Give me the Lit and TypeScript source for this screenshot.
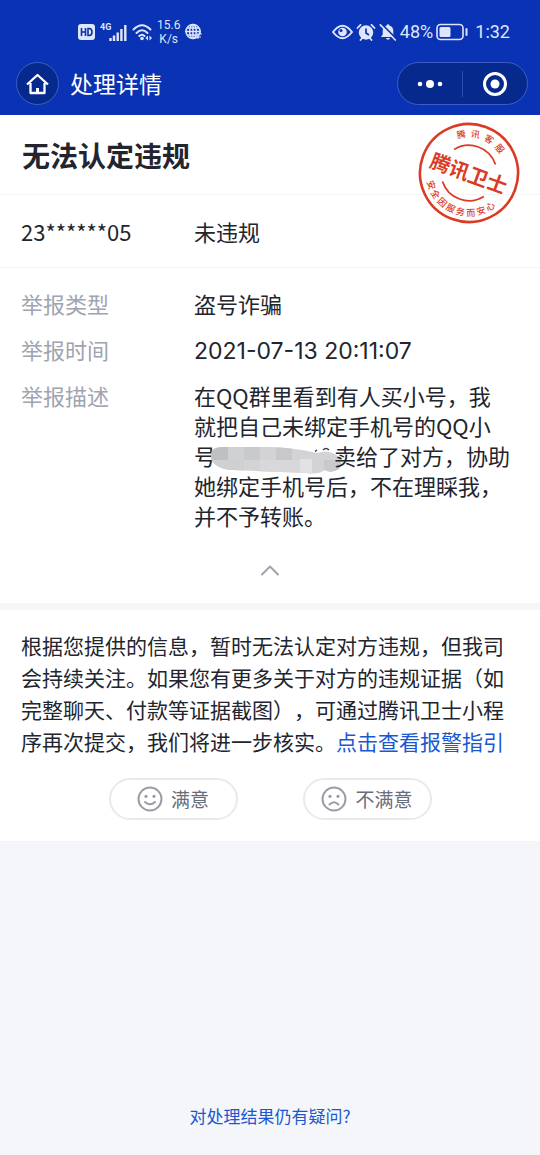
import { LitElement, html, css, svg } from "lit";
import { customElement, state } from "lit/decorators.js";

@customElement("status-bar")
class StatusBar extends LitElement {
  static styles = css`
    :host {
      display: flex;
      justify-content: space-between;
      align-items: center;
      height: 52px;
      padding: 11px 30px 0 78px;
      box-sizing: border-box;
      color: #dfe6fb;
      font-family: Roboto, "Noto Sans CJK SC", sans-serif;
    }
    .group {
      display: flex;
      align-items: center;
      gap: 4px;
    }
    .right {
      gap: 3px;
    }
    .speed {
      display: flex;
      flex-direction: column;
      align-items: center;
      font-size: 12px;
      line-height: 14px;
    }
    .level,
    .clock {
      font-size: 18px;
      line-height: 22px;
    }
    .clock {
      margin-left: 4px;
    }
    svg {
      display: block;
    }
    .net {
      font: 700 9px Roboto, sans-serif;
    }
  `;

  render() {
    return html`
      <div class="group">
        <svg width="17" height="16" viewBox="0 0 17 16">
          <rect width="17" height="16" rx="3" fill="#dfe6fb" />
          <path
            d="M3.5 4v8M7.5 4v8M3.5 8h4M10 4.500v7h1.200q2.800 0 2.800-3.500t-2.800-3.500z"
            fill="none"
            stroke="#0a30ae"
            stroke-width="1.600"
          />
        </svg>
        <svg width="29" height="22" viewBox="0 0 29 22">
          <text class="net" x="1" y="9" fill="#dfe6fb">4G</text>
          <path
            d="M11.500 17v3M15 14.500v5.500M18.700 11.500v8.500M22.400 8v12M26.300 4v16"
            stroke="#dfe6fb"
            stroke-width="2.400"
          />
        </svg>
        <svg width="21" height="18" viewBox="0 0 21 18">
          <path
            d="M1.500 6.500Q10 -2 18.500 6.500M4.500 10Q10 4.500 15.500 10M7.300 13Q10 10.500 12.500 13"
            fill="none"
            stroke="#dfe6fb"
            stroke-width="2"
            stroke-linecap="round"
          />
          <circle cx="10" cy="15.500" r="1.800" fill="#dfe6fb" />
          <path d="M16 12.500v5l-2.500-2.500zM17.500 12.500v5l2.500-2.500z" fill="#dfe6fb" />
        </svg>
        <span class="speed"><span>15.6</span><span>K/s</span></span>
        <svg width="18" height="18" viewBox="0 0 18 18" fill="none" stroke="#dfe6fb" stroke-width="1.500">
          <circle cx="9" cy="8.500" r="7" />
          <ellipse cx="9" cy="8.500" rx="3.300" ry="7" />
          <path d="M9 1.500v14M2.800 5h12.400M1 8.500h16M2.800 12h12.400" />
          <path d="M13 11h4l-1.500-1.500M17 14h-4l1.500 1.500" stroke-width="1.200" />
        </svg>
      </div>
      <div class="group right">
        <svg width="21" height="16" viewBox="0 0 21 16">
          <path d="M1 8Q10.500-4.500 20 8Q10.500 20.500 1 8z" fill="none" stroke="#dfe6fb" stroke-width="2" />
          <circle cx="10.500" cy="8" r="4.300" fill="#dfe6fb" />
          <circle cx="9" cy="6.500" r="1.500" fill="#0a30ae" />
        </svg>
        <svg width="20" height="18" viewBox="0 0 20 18">
          <circle cx="10" cy="9.500" r="7.200" fill="#dfe6fb" />
          <path
            d="M1.500 5l3-3.200M18.500 5l-3-3.200M4.500 17l1.800-2M15.500 17l-1.800-2"
            stroke="#dfe6fb"
            stroke-width="1.800"
            stroke-linecap="round"
          />
          <path d="M10 5.500v4.500l3 2" fill="none" stroke="#0a30ae" stroke-width="1.700" />
        </svg>
        <svg width="18" height="18" viewBox="0 0 18 18">
          <path
            d="M9 1.200q1.300 0 1.300 1.300 4 1.200 4 5.500v3.500l1.700 2.500H2l1.700-2.500V8q0-4.300 4-5.500Q7.700 1.200 9 1.200zM7 15h4q-.4 1.800-2 1.800T7 15z"
            fill="#dfe6fb"
          />
          <path d="M2.500 0.800l15 15.200" stroke="#0a30ae" stroke-width="1.700" />
          <path d="M1.300 1.800l15 15.200" stroke="#dfe6fb" stroke-width="1.700" stroke-linecap="round" />
        </svg>
        <span class="level">48%</span>
        <svg width="32" height="18" viewBox="0 0 32 18">
          <rect x="1" y="1.500" width="26" height="15" rx="3.500" fill="none" stroke="#dfe6fb" stroke-width="1.600" />
          <rect x="3.500" y="4" width="11" height="10" rx="1.500" fill="#dfe6fb" />
          <path d="M30.500 6v6" stroke="#dfe6fb" stroke-width="2" stroke-linecap="round" />
        </svg>
        <span class="clock">1:32</span>
      </div>
    `;
  }
}

@customElement("guard-stamp")
class GuardStamp extends LitElement {
  static styles = css`
    :host {
      display: block;
      width: 102px;
      height: 102px;
    }
    svg {
      display: block;
      width: 100%;
      height: 100%;
    }
    text {
      fill: #db3b24;
      font-family: "Noto Sans CJK SC", sans-serif;
      text-anchor: middle;
    }
    .name {
      font-size: 20px;
      font-weight: 700;
    }
    .rim {
      font-size: 9px;
      font-weight: 500;
    }
  `;

  private rim(chars: string, step: number, top: boolean) {
    const list = [...chars];
    return list.map((c, i) => {
      const a = (i - (list.length - 1) / 2) * step * (top ? 1 : -1);
      return svg`<text class="rim" y=${top ? -36 : 43} transform="rotate(${a})">${c}</text>`;
    });
  }

  render() {
    return html`
      <svg viewBox="-51 -51 102 102" role="img" aria-label="腾讯卫士">
        <g transform="rotate(20)">
          <circle r="49" fill="none" stroke="#db3b24" stroke-width="2.600" />
          <path
            d="M-22-17A28 28 0 0 1 22-17M-22 17A28 28 0 0 0 22 17"
            fill="none"
            stroke="#db3b24"
            stroke-width="1.800"
          />
          ${this.rim("腾讯客服", 21, true)} ${this.rim("安全因服务而安心", 15, false)}
          <text class="name" y="8">腾讯卫士</text>
        </g>
      </svg>
    `;
  }
}

@customElement("app-root")
class AppRoot extends LitElement {
  static styles = css`
    :host {
      display: flex;
      flex-direction: column;
      min-height: 100vh;
      background: #f4f6fa;
      color: #22252e;
      font-family: "Noto Sans CJK SC", sans-serif;
      text-spacing-trim: space-all;
    }
    header {
      background: #0932b4;
      color: #fff;
    }
    button {
      font: inherit;
      color: inherit;
      background: none;
      border: 0;
      padding: 0;
      margin: 0;
      cursor: pointer;
    }
    svg {
      display: block;
    }
    a {
      color: #1a58d0;
      text-decoration: none;
    }
    .nav {
      display: flex;
      align-items: center;
      gap: 11px;
      height: 63px;
      padding: 0 12px 0 16px;
    }
    .home,
    .capsule {
      background: #06298e;
      border: 1px solid #3d5fc4;
      box-sizing: border-box;
      height: 43px;
    }
    .home {
      display: grid;
      place-items: center;
      width: 43px;
      border-radius: 50%;
    }
    .nav h1 {
      flex: 1;
      margin: 0;
      padding-bottom: 2px;
      font-size: 23px;
      line-height: 32px;
      font-weight: 400;
    }
    .capsule {
      display: grid;
      grid-template-columns: 1fr 1px 1fr;
      align-items: center;
      width: 131px;
      border-radius: 22px;
    }
    .capsule button {
      display: grid;
      place-items: center;
      height: 100%;
    }
    .split {
      height: 26px;
      background: #2c4eb0;
    }
    .panel {
      background: #fff;
      position: relative;
    }
    .stamp {
      position: absolute;
      top: 7px;
      right: 20px;
    }
    h2 {
      margin: 0;
      padding: 22px 22px 20px;
      font-size: 28px;
      line-height: 37px;
      font-weight: 700;
      border-bottom: 1px solid #f3f4f6;
    }
    dl {
      margin: 0;
      display: grid;
      gap: 16px;
      padding: 20px 29px 0 21px;
      font-size: 22px;
      line-height: 30px;
    }
    dl div {
      display: grid;
      grid-template-columns: 173px 1fr;
    }
    dt {
      color: #a0a4b0;
    }
    dd {
      margin: 0;
    }
    .account {
      padding: 21px 29px 21px 21px;
      border-bottom: 1px solid #f3f4f6;
    }
    .account dt {
      color: inherit;
    }
    time {
      font-family: Inter, "Noto Sans CJK SC", sans-serif;
      font-size: 23px;
      line-height: 23px;
    }
    .smudge {
      display: inline-block;
      width: 118px;
      height: 26px;
      margin: -4px 0;
      vertical-align: -4px;
      overflow: visible;
    }
    .fold {
      display: grid;
      place-items: center;
      width: 100%;
      height: 73px;
      padding-top: 6px;
    }
    .answer {
      margin-top: 7px;
      padding: 19px 21px 21px;
    }
    .answer p {
      margin: 0;
      font-size: 21px;
      line-height: 32px;
    }
    .votes {
      display: flex;
      justify-content: center;
      gap: 65px;
      margin-top: 21px;
    }
    .votes button {
      display: flex;
      align-items: center;
      justify-content: center;
      gap: 8px;
      width: 129px;
      height: 42px;
      box-sizing: border-box;
      border: 2px solid #e9eaed;
      border-radius: 21px;
      color: #686d7c;
      font-size: 19px;
      line-height: 28px;
    }
    footer {
      margin-top: auto;
      padding: 27px 0;
      text-align: center;
      font-size: 17px;
      line-height: 24px;
    }
  `;

  @state() private open = true;

  private face(mouth: string) {
    return html`<svg width="26" height="26" viewBox="0 0 26 26" fill="none" stroke="#9a9da8" stroke-width="2">
      <circle cx="13" cy="13" r="11.500" />
      <path d=${mouth} stroke-linecap="round" />
      <circle cx="9" cy="10.300" r="1.600" fill="#9a9da8" stroke="none" />
      <circle cx="17" cy="10.300" r="1.600" fill="#9a9da8" stroke="none" />
    </svg>`;
  }

  private smudge() {
    return html`<svg class="smudge" viewBox="0 0 118 26" aria-hidden="true">
      <defs>
        <clipPath id="blob">
          <path
            d="M-5 7Q-4-1 9 0L55 0Q80 1 101 6Q112 2 120 8Q128 15 123 22Q115 27 109 23Q102 28 91 26L16 23Q-6 21-5 7z"
          />
        </clipPath>
      </defs>
      <g clip-path="url(#blob)">
        <rect x="-6" y="-2" width="134" height="30" fill="#d3d3d5" />
        <rect x="-6" y="-2" width="18" height="15" fill="#bfc0c3" />
        <rect x="12" y="-2" width="16" height="15" fill="#d0d1d3" />
        <rect x="28" y="-2" width="16" height="15" fill="#c9cacc" />
        <rect x="60" y="-2" width="16" height="15" fill="#c8c8cb" />
        <rect x="-6" y="13" width="34" height="15" fill="#cfd0d2" />
        <rect x="44" y="13" width="40" height="15" fill="#d8d8da" />
        <rect x="84" y="12" width="12" height="16" fill="#e2e2e4" />
        <rect x="108" y="13" width="18" height="14" fill="#c9c9cc" />
      </g>
      <path d="M99 4.500l2-1.500M107 3q3-3 6 0" fill="none" stroke="#3a3d45" stroke-width="1.500" />
    </svg>`;
  }

  render() {
    return html`
      <header>
        <status-bar></status-bar>
        <nav class="nav">
          <button class="home" aria-label="首页">
            <svg width="23" height="22" viewBox="0 0 23 22" fill="none" stroke="#fff" stroke-width="2.300">
              <path d="M1 11.500L11.500 2L22 11.500M4.500 10V20H18.500V10" stroke-linejoin="round" />
              <path d="M11.500 20v-5" stroke-width="3" />
            </svg>
          </button>
          <h1>处理详情</h1>
          <div class="capsule">
            <button aria-label="更多">
              <svg width="26" height="10" viewBox="0 0 26 10" fill="#fff">
                <circle cx="3" cy="5" r="2.300" />
                <circle cx="13" cy="5" r="4" />
                <circle cx="23" cy="5" r="2.300" />
              </svg>
            </button>
            <span class="split"></span>
            <button aria-label="关闭">
              <svg width="26" height="26" viewBox="0 0 26 26">
                <circle cx="13" cy="13" r="10.500" fill="none" stroke="#fff" stroke-width="3" />
                <circle cx="13" cy="13" r="4.500" fill="#fff" />
              </svg>
            </button>
          </div>
        </nav>
      </header>

      <section class="panel">
        <h2>无法认定违规</h2>
        <dl class="account">
          <div>
            <dt>23******05</dt>
            <dd>未违规</dd>
          </div>
        </dl>
        <dl>
          <div>
            <dt>举报类型</dt>
            <dd>盗号诈骗</dd>
          </div>
          <div>
            <dt>举报时间</dt>
            <dd><time>2021-07-13 20:11:07</time></dd>
          </div>
          ${this.open
            ? html`<div>
                <dt>举报描述</dt>
                <dd>在QQ群里看到有人买小号，我就把自己未绑定手机号的QQ小号${this.smudge()}卖给了对方，协助她绑定手机号后，不在理睬我，并不予转账。</dd>
              </div>`
            : ""}
        </dl>
        <button class="fold" aria-label="收起" aria-expanded=${this.open} @click=${() => (this.open = !this.open)}>
          <svg width="20" height="12" viewBox="0 0 20 12" fill="none" stroke="#a0a3ad" stroke-width="2">
            <path d="M2 10.500L10 2.500L18 10.500" stroke-linecap="round" stroke-linejoin="round" />
          </svg>
        </button>
        <guard-stamp class="stamp"></guard-stamp>
      </section>

      <section class="panel answer">
        <p>
          根据您提供的信息，暂时无法认定对方违规，但我司会持续关注。如果您有更多关于对方的违规证据（如完整聊天、付款等证据截图），可通过腾讯卫士小程序再次提交，我们将进一步核实。<a
            href="#guide"
            >点击查看报警指引</a
          >
        </p>
        <div class="votes">
          <button>${this.face("M8 16Q13 20.500 18 16")}满意</button>
          <button>${this.face("M8.500 18.500Q13 14 17.500 18.500")}不满意</button>
        </div>
      </section>

      <footer><a href="#question">对处理结果仍有疑问?</a></footer>
    `;
  }
}
